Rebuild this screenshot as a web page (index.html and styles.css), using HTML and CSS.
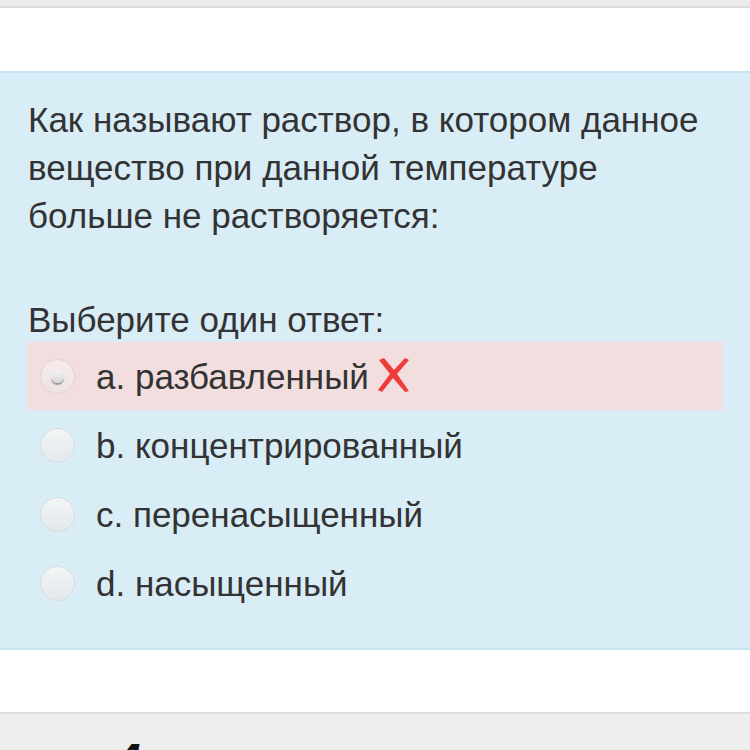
FILE: index.html
```html
<!DOCTYPE html>
<html lang="ru">
<head>
<meta charset="utf-8">
<link rel="stylesheet" href="styles.css">
</head>
<body>
<div class="topbar"></div>
<div class="spacer"></div>
<section class="que">
  <div class="qtext">Как называют раствор, в котором данное вещество при данной температуре больше не растворяется:</div>
  <div class="prompt">Выберите один ответ:</div>
  <div class="answers">
    <div class="opt incorrect">
      <span class="radio checked"><span class="dot"></span></span>
      <span class="label">a. разбавленный</span>
      <svg class="xmark" width="34" height="36" viewBox="0 0 34 36"><path d="M2 3 L7 1 L17 13 L28 1 L32 3 L20 17 L32 34 L28 35 L16 21 L5 35 L1 33 L13 17 Z" fill="#ee3b3b"/></svg>
    </div>
    <div class="opt">
      <span class="radio"></span>
      <span class="label">b. концентрированный</span>
    </div>
    <div class="opt">
      <span class="radio"></span>
      <span class="label">c. перенасыщенный</span>
    </div>
    <div class="opt">
      <span class="radio"></span>
      <span class="label">d. насыщенный</span>
    </div>
  </div>
</section>
<div class="spacer2"></div>
<footer class="next"><span class="num">4</span></footer>
</body>
</html>
```
FILE: styles.css
```css
html, body {
  margin: 0;
  padding: 0;
  background: #fff;
  overflow: hidden;
  height: 750px;
}
body {
  font-family: "Liberation Sans", Arial, sans-serif;
  color: #333;
}
.topbar {
  height: 6px;
  background: #ececec;
  border-bottom: 2px solid #dcdcdc;
}
.spacer {
  height: 63px;
}
.que {
  background: #d9edf7;
  border-top: 2px solid #c4e5ef;
  border-bottom: 2px solid #c4e5ef;
  padding: 23px 27px 31px 27px;
}
.qtext {
  font-size: 35px;
  line-height: 48px;
  padding-left: 1px;
}
.prompt {
  font-size: 35px;
  line-height: 48px;
  margin-top: 56px;
  padding-left: 1px;
}
.answers {
  display: flex;
  flex-direction: column;
  gap: 1px;
  margin-top: -2px;
}
.opt {
  display: flex;
  align-items: center;
  height: 68px;
  font-size: 35px;
}
.opt.incorrect {
  background: #f2dede;
}
.radio {
  width: 35px;
  height: 35px;
  box-sizing: border-box;
  border-radius: 50%;
  margin-left: 13px;
  margin-right: 21px;
  border: 1px solid #d4dde2;
  background: linear-gradient(#f3f5f6, #e3e8eb);
  display: flex;
  align-items: center;
  justify-content: center;
}
.radio.checked {
  border-color: #e3d4d4;
  background: linear-gradient(#f6eaea, #efe2e2);
}
.dot {
  width: 13px;
  height: 13px;
  border-radius: 50%;
  background: linear-gradient(#f4f4f4, #d8d8d8);
  box-shadow: 0 2px 1px #9a9a9a;
}
.label {
  white-space: nowrap;
  margin-top: 2px;
}
.xmark {
  margin-left: 8px;
  margin-top: -2px;
}
.spacer2 {
  height: 62px;
}
.next {
  background: #eeeeee;
  border-top: 2px solid #dcdcdc;
  height: 60px;
  padding-left: 116px;
}
.num {
  display: block;
  font-size: 44px;
  font-weight: bold;
  font-style: italic;
  color: #111;
  line-height: 1;
  padding-top: 24px;
}
```
